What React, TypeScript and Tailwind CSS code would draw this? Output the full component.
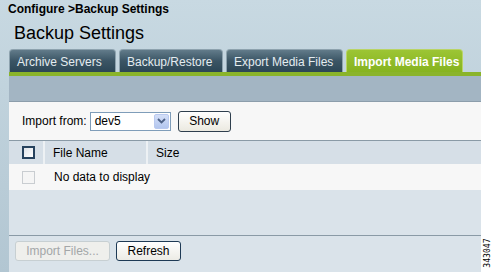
import React from "react";

const font = "font-['Liberation_Sans',Arial,sans-serif]";

function Tab({ label, w, active }: { label: string; w: string; active?: boolean }) {
  if (active) {
    return (
      <div
        className={`${w} h-[23px] rounded-t-[4px] border border-b-0 border-[#b9d466] bg-gradient-to-b from-[#9cc534] to-[#86b31f] pl-[7px] pt-[5px] text-[12px] font-bold leading-[14px] text-white`}
      >
        {label}
      </div>
    );
  }
  return (
    <div
      className={`${w} h-[23px] rounded-t-[4px] border border-b-0 border-[#8da2ae] bg-gradient-to-b from-[#627b8a] via-[#3b5565] to-[#2c4655] pl-[7px] pt-[5px] text-[12px] leading-[14px] text-[#e4ecf0]`}
    >
      {label}
    </div>
  );
}

export default function App() {
  return (
    <div className={`w-[493px] h-[272px] flex bg-white ${font} text-black`}>
      <div className="w-[481px] h-[272px] flex flex-col bg-gradient-to-b from-[#c8d9e2] to-[#b2c6d2]">
        <div className="h-[17px] pl-[8px] pt-[2px] text-[12px] font-bold leading-[14px]">
          Configure &gt;Backup Settings
        </div>
        <div className="h-[32px] pl-[14px] pt-[5px] text-[18px] leading-[22px]">Backup Settings</div>
        <div className="h-[23px] flex items-end gap-[3px] pl-[9px]">
          <Tab label="Archive Servers" w="w-[107px]" />
          <Tab label="Backup/Restore" w="w-[104px]" />
          <Tab label="Export Media Files" w="w-[117px]" />
          <Tab label="Import Media Files" w="w-[117px]" active />
        </div>
        <div className="ml-[9px] flex-1 flex flex-col">
          <div className="h-[4px] bg-[#8ab42a]" />
          <div className="h-[26px] bg-[#a3b5c3] border-b border-[#8c9dab]" />
          <div className="h-[38px] bg-[#f7f7f7] flex items-center pl-[13px] text-[12px]">
            <span className="mr-[3px]">Import from:</span>
            <div className="w-[81px] h-[19px] border border-[#7f9db9] bg-white flex items-center justify-between pl-[4px] pr-[1px]">
              <span className="leading-[14px]">dev5</span>
              <div className="w-[15px] h-[15px] rounded-[2px] bg-gradient-to-b from-[#d4dff8] to-[#b3c6ee] border border-[#b9c9ef] flex items-center justify-center">
                <svg width="9" height="6" viewBox="0 0 9 6">
                  <path d="M1 1 L4.5 4.5 L8 1" fill="none" stroke="#4d6185" strokeWidth="1.8" />
                </svg>
              </div>
            </div>
            <button className="ml-[7px] w-[53px] h-[21px] rounded-[3px] border border-[#2f3f4e] bg-gradient-to-b from-white to-[#ebe9e0] text-[12px] leading-[14px]">
              Show
            </button>
          </div>
          <div className="h-px bg-[#8a9aa6]" />
          <div className="h-[23px] bg-[#d6dfe7] flex items-stretch text-[12px]">
            <div className="w-[36px] flex items-center pl-[13px] border-r-2 border-[#edf1f4]">
              <div className="w-[13px] h-[13px] border-2 border-[#26425d] bg-gradient-to-br from-[#dfe3e8] to-white" />
            </div>
            <div className="w-[103px] flex items-center pl-[8px] border-r-2 border-[#edf1f4]">File Name</div>
            <div className="flex-1 flex items-center pl-[8px]">Size</div>
          </div>
          <div className="h-[26px] bg-[#f7f7f7] flex items-center text-[12px]">
            <div className="w-[13px] h-[13px] ml-[13px] border border-[#c9cdd1] bg-[#f5f5f5]" />
            <span className="ml-[19px]">No data to display</span>
          </div>
          <div className="h-[45px] bg-[#dae3ea]" />
          <div className="h-px bg-[#8a9aa6]" />
          <div className="flex-1 bg-[#dae3ea] flex items-start pt-[5px] pl-[6px] gap-[6px] text-[12px]">
            <button className="w-[95px] h-[20px] rounded-[3px] border border-[#c7cfd2] bg-[#efefec] text-[#a3a6a8] leading-[14px]">
              Import Files...
            </button>
            <button className="w-[65px] h-[20px] rounded-[3px] border border-[#1e3a55] bg-gradient-to-b from-white to-[#ecebe5] leading-[14px]">
              Refresh
            </button>
          </div>
        </div>
      </div>
      <div className="w-[12px] h-[272px] flex flex-col justify-end items-center pb-[2px]">
        <div className="h-[34px] w-[12px] flex items-center justify-center">
          <span className="block -rotate-90 text-[9px] leading-[10px] whitespace-nowrap font-['DejaVu_Sans_Mono',monospace] scale-x-[0.9]">
            343047
          </span>
        </div>
      </div>
    </div>
  );
}
